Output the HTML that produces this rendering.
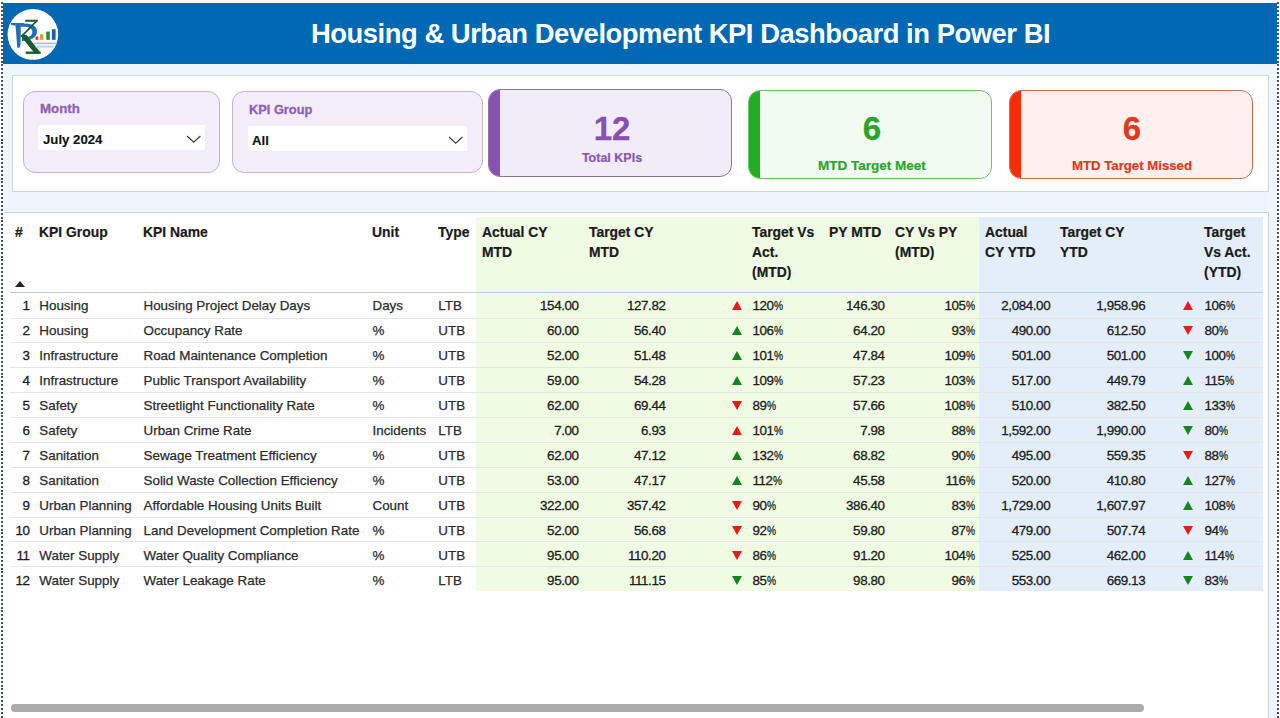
<!DOCTYPE html>
<html><head><meta charset="utf-8">
<style>
*{margin:0;padding:0;box-sizing:border-box}
html,body{width:1280px;height:718px;overflow:hidden;background:#fff;font-family:"Liberation Sans",sans-serif}
.abs{position:absolute}
#bg{left:3px;top:63px;width:1274px;height:655px;background:#eef5fb}
#hdr{left:3px;top:3px;width:1274px;height:60.5px;background:#0068b2}
#title{left:311px;top:17.5px;color:#fff;font-weight:bold;font-size:27.4px;letter-spacing:-0.47px;white-space:nowrap;line-height:32px}
#logo{left:8px;top:8px;width:51px;height:51px;border-radius:50%;background:#fff}
#dotL{left:1px;top:2px;width:2px;height:716px;background:repeating-linear-gradient(to bottom,#454c55 0 2px,transparent 2px 3.9px)}
#dotR{left:1277px;top:2px;width:2px;height:716px;background:repeating-linear-gradient(to bottom,#454c55 0 2px,transparent 2px 3.9px)}
#slpanel{left:12px;top:75px;width:1257px;height:117px;background:#fff;border:1px solid #c6dae6}
.slicer{background:#f3ecf9;border:1px solid #c4b3d0;border-radius:12px}
.sllabel{color:#8c5fb5;font-weight:bold;font-size:13.3px;-webkit-text-stroke:0.3px #8c5fb5;white-space:nowrap}
.dd{background:#fff}
.ddtext{color:#111;font-weight:bold;font-size:13.2px;-webkit-text-stroke:0.15px #111;white-space:nowrap}
.card{border-radius:12px;overflow:hidden}
#tpanel{left:4px;top:212px;width:1265px;height:506px;background:#fff;border-top:1px solid #c3d6e2;border-right:1px solid #c3d6e2}
#gbg{left:476px;top:217px;width:503px;height:374px;background:#f0fbe3}
#bbg{left:979px;top:217px;width:284px;height:374px;background:#e3eefa}
.th{font-weight:bold;font-size:13.9px;color:#1a1a1a;-webkit-text-stroke:0.2px #1a1a1a;line-height:20px;white-space:nowrap}
.td{font-size:13.4px;color:#2b2b2b;-webkit-text-stroke:0.25px #2b2b2b;white-space:nowrap;line-height:16px}
.r{text-align:right}
.n{letter-spacing:-0.4px;color:#1c1c1c;-webkit-text-stroke:0.3px #1c1c1c}
.pc{display:inline-block;transform:scaleX(.76);transform-origin:0 0;margin-right:-2.9px}
.knum{font-weight:bold;-webkit-text-stroke:0.3px currentColor;text-align:center;line-height:36px;white-space:nowrap}
.klab{font-weight:bold;-webkit-text-stroke:0.2px currentColor;text-align:center;line-height:16px;white-space:nowrap}
#scroll{left:11px;top:704px;width:1133px;height:8px;background:#ababab;border-radius:4px}
</style></head><body>
<div class="abs" id="bg"></div>
<div class="abs" id="hdr"></div>
<svg class="abs" style="left:6px;top:6px" width="56" height="56" viewBox="0 0 718 718">
<circle cx="345" cy="365" r="325" fill="#fff"/>
<path d="M62 218 L232 218 L228 244 L190 250 L186 500 L172 535 L145 535 L122 250 L70 246 Z" fill="#1f6fb5"/>
<path d="M185 226 C345 210 402 262 397 334 C392 408 320 448 205 448 L205 408 C292 404 338 382 338 334 C338 282 292 262 185 266 Z" fill="#1f6fb5"/>
<path d="M245 175 L412 175 L404 202 L245 202 Z" fill="#1d5a2a"/>
<path d="M378 192 L402 200 L208 398 L185 388 Z" fill="#1d5a2a"/>
<path d="M182 378 L262 370 L438 592 L362 600 Z" fill="#1d5a2a"/>
<path d="M252 584 L445 584 L445 614 L252 614 Z" fill="#1d5a2a"/>
<rect x="380" y="392" width="34" height="42" fill="#d62a1c"/>
<rect x="436" y="362" width="40" height="72" fill="#e8962a"/>
<rect x="516" y="328" width="46" height="106" fill="#2b8a3e"/>
<rect x="588" y="298" width="48" height="136" fill="#1a5fa8"/>
<rect x="355" y="468" width="285" height="22" fill="#5a6a90" opacity="0.45"/>
<rect x="372" y="508" width="238" height="26" fill="#6cc0d0" opacity="0.55"/>
</svg>
<div class="abs" id="title">Housing &amp; Urban Development KPI Dashboard in Power BI</div>
<div class="abs" id="slpanel"></div>
<div class="abs slicer" style="left:23px;top:91px;width:197px;height:82px"></div>
<div class="abs sllabel" style="left:40px;top:101px">Month</div>
<div class="abs dd" style="left:38px;top:125px;width:167px;height:25px"></div>
<div class="abs ddtext" style="left:43px;top:132px">July 2024</div>
<div class="abs slicer" style="left:232px;top:91px;width:251px;height:82px"></div>
<div class="abs sllabel" style="left:249px;top:102px;font-size:12.8px">KPI Group</div>
<div class="abs dd" style="left:248px;top:126px;width:219px;height:25px"></div>
<div class="abs ddtext" style="left:252px;top:133px">All</div>

<div class="abs card" style="left:488px;top:89px;width:244px;height:88px;background:#f2ecf8;border:1px solid #8a789c"><div class="abs" style="left:-1px;top:-1px;width:12px;height:88px;background:#8752ad"></div></div>
<div class="abs knum" style="left:560px;width:104px;top:111px;color:#8a4fb0;font-size:33px">12</div>
<div class="abs klab" style="left:560px;width:104px;top:150px;color:#8a57b0;font-size:12.5px">Total KPIs</div>
<div class="abs card" style="left:748px;top:90px;width:244px;height:89px;background:#f1fbf1;border:1px solid #6fc26f"><div class="abs" style="left:-1px;top:-1px;width:12px;height:89px;background:#22ad22"></div></div>
<div class="abs knum" style="left:820px;width:104px;top:111px;color:#2aa52a;font-size:33px">6</div>
<div class="abs klab" style="left:792px;width:160px;top:158px;color:#2aa52a;font-size:13.5px">MTD Target Meet</div>
<div class="abs card" style="left:1009px;top:90px;width:244px;height:89px;background:#fdf0ee;border:1px solid #c8705e"><div class="abs" style="left:-1px;top:-1px;width:12px;height:89px;background:#fa2c08"></div></div>
<div class="abs knum" style="left:1080px;width:104px;top:111px;color:#e03a1e;font-size:33px">6</div>
<div class="abs klab" style="left:1052px;width:160px;top:158px;color:#e03a1e;font-size:13.2px">MTD Target Missed</div>
<svg class="abs" style="left:186px;top:135px" width="16" height="9"><polyline points="1,1 7.7,7.2 14.4,1" fill="none" stroke="#3a3a3a" stroke-width="1.2"/></svg>
<svg class="abs" style="left:448px;top:136px" width="16" height="9"><polyline points="1,1 7.7,7.2 14.4,1" fill="none" stroke="#3a3a3a" stroke-width="1.2"/></svg>
<div class="abs" id="tpanel"></div>
<div class="abs" id="gbg"></div>
<div class="abs" id="bbg"></div>
<div class="abs th" style="left:15px;top:221.5px">#</div>
<div class="abs th" style="left:39px;top:221.5px">KPI Group</div>
<div class="abs th" style="left:143px;top:221.5px">KPI Name</div>
<div class="abs th" style="left:372px;top:221.5px">Unit</div>
<div class="abs th" style="left:438px;top:221.5px">Type</div>
<div class="abs th" style="left:482px;top:221.5px">Actual CY<br>MTD</div>
<div class="abs th" style="left:589px;top:221.5px">Target CY<br>MTD</div>
<div class="abs th" style="left:752px;top:221.5px">Target Vs<br>Act.<br>(MTD)</div>
<div class="abs th" style="left:829px;top:221.5px">PY MTD</div>
<div class="abs th" style="left:895px;top:221.5px">CY Vs PY<br>(MTD)</div>
<div class="abs th" style="left:985px;top:221.5px">Actual<br>CY YTD</div>
<div class="abs th" style="left:1060px;top:221.5px">Target CY<br>YTD</div>
<div class="abs th" style="left:1204px;top:221.5px">Target<br>Vs Act.<br>(YTD)</div>
<svg class="abs" style="left:15px;top:281px" width="10" height="6"><polygon points="5,0 10,6 0,6" fill="#222"/></svg>
<div class="abs" style="left:10px;top:292px;width:1253px;height:1px;background:#bccfd9"></div>
<div class="abs" style="left:10px;top:317.50px;width:1253px;height:1px;background:#e4e6e6"></div>
<div class="abs" style="left:10px;top:342.38px;width:1253px;height:1px;background:#e4e6e6"></div>
<div class="abs" style="left:10px;top:367.26px;width:1253px;height:1px;background:#e4e6e6"></div>
<div class="abs" style="left:10px;top:392.14px;width:1253px;height:1px;background:#e4e6e6"></div>
<div class="abs" style="left:10px;top:417.02px;width:1253px;height:1px;background:#e4e6e6"></div>
<div class="abs" style="left:10px;top:441.90px;width:1253px;height:1px;background:#e4e6e6"></div>
<div class="abs" style="left:10px;top:466.78px;width:1253px;height:1px;background:#e4e6e6"></div>
<div class="abs" style="left:10px;top:491.66px;width:1253px;height:1px;background:#e4e6e6"></div>
<div class="abs" style="left:10px;top:516.54px;width:1253px;height:1px;background:#e4e6e6"></div>
<div class="abs" style="left:10px;top:541.42px;width:1253px;height:1px;background:#e4e6e6"></div>
<div class="abs" style="left:10px;top:566.30px;width:1253px;height:1px;background:#e4e6e6"></div>
<div class="abs td" style="left:39.3px;top:298.30px">Housing</div>
<div class="abs td" style="left:143.5px;top:298.30px">Housing Project Delay Days</div>
<div class="abs td" style="left:372.5px;top:298.30px">Days</div>
<div class="abs td" style="left:438.3px;top:298.30px">LTB</div>
<div class="abs td n" style="left:752.4px;top:298.30px">120<span class="pc">%</span></div>
<div class="abs td n" style="left:1204.5px;top:298.30px">106<span class="pc">%</span></div>
<div class="abs td r n" style="right:1250.50px;top:298.30px">1</div>
<div class="abs td r n" style="right:701.40px;top:298.30px">154.00</div>
<div class="abs td r n" style="right:614.50px;top:298.30px">127.82</div>
<div class="abs td r n" style="right:395.40px;top:298.30px">146.30</div>
<div class="abs td r n" style="right:305.80px;top:298.30px">105<span class="pc">%</span></div>
<div class="abs td r n" style="right:229.80px;top:298.30px">2,084.00</div>
<div class="abs td r n" style="right:134.80px;top:298.30px">1,958.96</div>
<svg class="abs" style="left:731.5px;top:301.30px" width="10" height="9"><polygon points="5,0 10,9 0,9" fill="#e81a1a"/></svg>
<svg class="abs" style="left:1183px;top:301.30px" width="10" height="9"><polygon points="5,0 10,9 0,9" fill="#e81a1a"/></svg>
<div class="abs td" style="left:39.3px;top:323.25px">Housing</div>
<div class="abs td" style="left:143.5px;top:323.25px">Occupancy Rate</div>
<div class="abs td" style="left:372.5px;top:323.25px">%</div>
<div class="abs td" style="left:438.3px;top:323.25px">UTB</div>
<div class="abs td n" style="left:752.4px;top:323.25px">106<span class="pc">%</span></div>
<div class="abs td n" style="left:1204.5px;top:323.25px">80<span class="pc">%</span></div>
<div class="abs td r n" style="right:1250.50px;top:323.25px">2</div>
<div class="abs td r n" style="right:701.40px;top:323.25px">60.00</div>
<div class="abs td r n" style="right:614.50px;top:323.25px">56.40</div>
<div class="abs td r n" style="right:395.40px;top:323.25px">64.20</div>
<div class="abs td r n" style="right:305.80px;top:323.25px">93<span class="pc">%</span></div>
<div class="abs td r n" style="right:229.80px;top:323.25px">490.00</div>
<div class="abs td r n" style="right:134.80px;top:323.25px">612.50</div>
<svg class="abs" style="left:731.5px;top:326.25px" width="10" height="9"><polygon points="5,0 10,9 0,9" fill="#17851f"/></svg>
<svg class="abs" style="left:1183px;top:326.25px" width="10" height="9"><polygon points="0,0 10,0 5,9" fill="#e81a1a"/></svg>
<div class="abs td" style="left:39.3px;top:348.20px">Infrastructure</div>
<div class="abs td" style="left:143.5px;top:348.20px">Road Maintenance Completion</div>
<div class="abs td" style="left:372.5px;top:348.20px">%</div>
<div class="abs td" style="left:438.3px;top:348.20px">UTB</div>
<div class="abs td n" style="left:752.4px;top:348.20px">101<span class="pc">%</span></div>
<div class="abs td n" style="left:1204.5px;top:348.20px">100<span class="pc">%</span></div>
<div class="abs td r n" style="right:1250.50px;top:348.20px">3</div>
<div class="abs td r n" style="right:701.40px;top:348.20px">52.00</div>
<div class="abs td r n" style="right:614.50px;top:348.20px">51.48</div>
<div class="abs td r n" style="right:395.40px;top:348.20px">47.84</div>
<div class="abs td r n" style="right:305.80px;top:348.20px">109<span class="pc">%</span></div>
<div class="abs td r n" style="right:229.80px;top:348.20px">501.00</div>
<div class="abs td r n" style="right:134.80px;top:348.20px">501.00</div>
<svg class="abs" style="left:731.5px;top:351.20px" width="10" height="9"><polygon points="5,0 10,9 0,9" fill="#17851f"/></svg>
<svg class="abs" style="left:1183px;top:351.20px" width="10" height="9"><polygon points="0,0 10,0 5,9" fill="#17851f"/></svg>
<div class="abs td" style="left:39.3px;top:373.15px">Infrastructure</div>
<div class="abs td" style="left:143.5px;top:373.15px">Public Transport Availability</div>
<div class="abs td" style="left:372.5px;top:373.15px">%</div>
<div class="abs td" style="left:438.3px;top:373.15px">UTB</div>
<div class="abs td n" style="left:752.4px;top:373.15px">109<span class="pc">%</span></div>
<div class="abs td n" style="left:1204.5px;top:373.15px">115<span class="pc">%</span></div>
<div class="abs td r n" style="right:1250.50px;top:373.15px">4</div>
<div class="abs td r n" style="right:701.40px;top:373.15px">59.00</div>
<div class="abs td r n" style="right:614.50px;top:373.15px">54.28</div>
<div class="abs td r n" style="right:395.40px;top:373.15px">57.23</div>
<div class="abs td r n" style="right:305.80px;top:373.15px">103<span class="pc">%</span></div>
<div class="abs td r n" style="right:229.80px;top:373.15px">517.00</div>
<div class="abs td r n" style="right:134.80px;top:373.15px">449.79</div>
<svg class="abs" style="left:731.5px;top:376.15px" width="10" height="9"><polygon points="5,0 10,9 0,9" fill="#17851f"/></svg>
<svg class="abs" style="left:1183px;top:376.15px" width="10" height="9"><polygon points="5,0 10,9 0,9" fill="#17851f"/></svg>
<div class="abs td" style="left:39.3px;top:398.10px">Safety</div>
<div class="abs td" style="left:143.5px;top:398.10px">Streetlight Functionality Rate</div>
<div class="abs td" style="left:372.5px;top:398.10px">%</div>
<div class="abs td" style="left:438.3px;top:398.10px">UTB</div>
<div class="abs td n" style="left:752.4px;top:398.10px">89<span class="pc">%</span></div>
<div class="abs td n" style="left:1204.5px;top:398.10px">133<span class="pc">%</span></div>
<div class="abs td r n" style="right:1250.50px;top:398.10px">5</div>
<div class="abs td r n" style="right:701.40px;top:398.10px">62.00</div>
<div class="abs td r n" style="right:614.50px;top:398.10px">69.44</div>
<div class="abs td r n" style="right:395.40px;top:398.10px">57.66</div>
<div class="abs td r n" style="right:305.80px;top:398.10px">108<span class="pc">%</span></div>
<div class="abs td r n" style="right:229.80px;top:398.10px">510.00</div>
<div class="abs td r n" style="right:134.80px;top:398.10px">382.50</div>
<svg class="abs" style="left:731.5px;top:401.10px" width="10" height="9"><polygon points="0,0 10,0 5,9" fill="#e81a1a"/></svg>
<svg class="abs" style="left:1183px;top:401.10px" width="10" height="9"><polygon points="5,0 10,9 0,9" fill="#17851f"/></svg>
<div class="abs td" style="left:39.3px;top:423.05px">Safety</div>
<div class="abs td" style="left:143.5px;top:423.05px">Urban Crime Rate</div>
<div class="abs td" style="left:372.5px;top:423.05px">Incidents</div>
<div class="abs td" style="left:438.3px;top:423.05px">LTB</div>
<div class="abs td n" style="left:752.4px;top:423.05px">101<span class="pc">%</span></div>
<div class="abs td n" style="left:1204.5px;top:423.05px">80<span class="pc">%</span></div>
<div class="abs td r n" style="right:1250.50px;top:423.05px">6</div>
<div class="abs td r n" style="right:701.40px;top:423.05px">7.00</div>
<div class="abs td r n" style="right:614.50px;top:423.05px">6.93</div>
<div class="abs td r n" style="right:395.40px;top:423.05px">7.98</div>
<div class="abs td r n" style="right:305.80px;top:423.05px">88<span class="pc">%</span></div>
<div class="abs td r n" style="right:229.80px;top:423.05px">1,592.00</div>
<div class="abs td r n" style="right:134.80px;top:423.05px">1,990.00</div>
<svg class="abs" style="left:731.5px;top:426.05px" width="10" height="9"><polygon points="5,0 10,9 0,9" fill="#e81a1a"/></svg>
<svg class="abs" style="left:1183px;top:426.05px" width="10" height="9"><polygon points="0,0 10,0 5,9" fill="#17851f"/></svg>
<div class="abs td" style="left:39.3px;top:448.00px">Sanitation</div>
<div class="abs td" style="left:143.5px;top:448.00px">Sewage Treatment Efficiency</div>
<div class="abs td" style="left:372.5px;top:448.00px">%</div>
<div class="abs td" style="left:438.3px;top:448.00px">UTB</div>
<div class="abs td n" style="left:752.4px;top:448.00px">132<span class="pc">%</span></div>
<div class="abs td n" style="left:1204.5px;top:448.00px">88<span class="pc">%</span></div>
<div class="abs td r n" style="right:1250.50px;top:448.00px">7</div>
<div class="abs td r n" style="right:701.40px;top:448.00px">62.00</div>
<div class="abs td r n" style="right:614.50px;top:448.00px">47.12</div>
<div class="abs td r n" style="right:395.40px;top:448.00px">68.82</div>
<div class="abs td r n" style="right:305.80px;top:448.00px">90<span class="pc">%</span></div>
<div class="abs td r n" style="right:229.80px;top:448.00px">495.00</div>
<div class="abs td r n" style="right:134.80px;top:448.00px">559.35</div>
<svg class="abs" style="left:731.5px;top:451.00px" width="10" height="9"><polygon points="5,0 10,9 0,9" fill="#17851f"/></svg>
<svg class="abs" style="left:1183px;top:451.00px" width="10" height="9"><polygon points="0,0 10,0 5,9" fill="#e81a1a"/></svg>
<div class="abs td" style="left:39.3px;top:472.95px">Sanitation</div>
<div class="abs td" style="left:143.5px;top:472.95px">Solid Waste Collection Efficiency</div>
<div class="abs td" style="left:372.5px;top:472.95px">%</div>
<div class="abs td" style="left:438.3px;top:472.95px">UTB</div>
<div class="abs td n" style="left:752.4px;top:472.95px">112<span class="pc">%</span></div>
<div class="abs td n" style="left:1204.5px;top:472.95px">127<span class="pc">%</span></div>
<div class="abs td r n" style="right:1250.50px;top:472.95px">8</div>
<div class="abs td r n" style="right:701.40px;top:472.95px">53.00</div>
<div class="abs td r n" style="right:614.50px;top:472.95px">47.17</div>
<div class="abs td r n" style="right:395.40px;top:472.95px">45.58</div>
<div class="abs td r n" style="right:305.80px;top:472.95px">116<span class="pc">%</span></div>
<div class="abs td r n" style="right:229.80px;top:472.95px">520.00</div>
<div class="abs td r n" style="right:134.80px;top:472.95px">410.80</div>
<svg class="abs" style="left:731.5px;top:475.95px" width="10" height="9"><polygon points="5,0 10,9 0,9" fill="#17851f"/></svg>
<svg class="abs" style="left:1183px;top:475.95px" width="10" height="9"><polygon points="5,0 10,9 0,9" fill="#17851f"/></svg>
<div class="abs td" style="left:39.3px;top:497.90px">Urban Planning</div>
<div class="abs td" style="left:143.5px;top:497.90px">Affordable Housing Units Built</div>
<div class="abs td" style="left:372.5px;top:497.90px">Count</div>
<div class="abs td" style="left:438.3px;top:497.90px">UTB</div>
<div class="abs td n" style="left:752.4px;top:497.90px">90<span class="pc">%</span></div>
<div class="abs td n" style="left:1204.5px;top:497.90px">108<span class="pc">%</span></div>
<div class="abs td r n" style="right:1250.50px;top:497.90px">9</div>
<div class="abs td r n" style="right:701.40px;top:497.90px">322.00</div>
<div class="abs td r n" style="right:614.50px;top:497.90px">357.42</div>
<div class="abs td r n" style="right:395.40px;top:497.90px">386.40</div>
<div class="abs td r n" style="right:305.80px;top:497.90px">83<span class="pc">%</span></div>
<div class="abs td r n" style="right:229.80px;top:497.90px">1,729.00</div>
<div class="abs td r n" style="right:134.80px;top:497.90px">1,607.97</div>
<svg class="abs" style="left:731.5px;top:500.90px" width="10" height="9"><polygon points="0,0 10,0 5,9" fill="#e81a1a"/></svg>
<svg class="abs" style="left:1183px;top:500.90px" width="10" height="9"><polygon points="5,0 10,9 0,9" fill="#17851f"/></svg>
<div class="abs td" style="left:39.3px;top:522.85px">Urban Planning</div>
<div class="abs td" style="left:143.5px;top:522.85px">Land Development Completion Rate</div>
<div class="abs td" style="left:372.5px;top:522.85px">%</div>
<div class="abs td" style="left:438.3px;top:522.85px">UTB</div>
<div class="abs td n" style="left:752.4px;top:522.85px">92<span class="pc">%</span></div>
<div class="abs td n" style="left:1204.5px;top:522.85px">94<span class="pc">%</span></div>
<div class="abs td r n" style="right:1250.50px;top:522.85px">10</div>
<div class="abs td r n" style="right:701.40px;top:522.85px">52.00</div>
<div class="abs td r n" style="right:614.50px;top:522.85px">56.68</div>
<div class="abs td r n" style="right:395.40px;top:522.85px">59.80</div>
<div class="abs td r n" style="right:305.80px;top:522.85px">87<span class="pc">%</span></div>
<div class="abs td r n" style="right:229.80px;top:522.85px">479.00</div>
<div class="abs td r n" style="right:134.80px;top:522.85px">507.74</div>
<svg class="abs" style="left:731.5px;top:525.85px" width="10" height="9"><polygon points="0,0 10,0 5,9" fill="#e81a1a"/></svg>
<svg class="abs" style="left:1183px;top:525.85px" width="10" height="9"><polygon points="0,0 10,0 5,9" fill="#e81a1a"/></svg>
<div class="abs td" style="left:39.3px;top:547.80px">Water Supply</div>
<div class="abs td" style="left:143.5px;top:547.80px">Water Quality Compliance</div>
<div class="abs td" style="left:372.5px;top:547.80px">%</div>
<div class="abs td" style="left:438.3px;top:547.80px">UTB</div>
<div class="abs td n" style="left:752.4px;top:547.80px">86<span class="pc">%</span></div>
<div class="abs td n" style="left:1204.5px;top:547.80px">114<span class="pc">%</span></div>
<div class="abs td r n" style="right:1250.50px;top:547.80px">11</div>
<div class="abs td r n" style="right:701.40px;top:547.80px">95.00</div>
<div class="abs td r n" style="right:614.50px;top:547.80px">110.20</div>
<div class="abs td r n" style="right:395.40px;top:547.80px">91.20</div>
<div class="abs td r n" style="right:305.80px;top:547.80px">104<span class="pc">%</span></div>
<div class="abs td r n" style="right:229.80px;top:547.80px">525.00</div>
<div class="abs td r n" style="right:134.80px;top:547.80px">462.00</div>
<svg class="abs" style="left:731.5px;top:550.80px" width="10" height="9"><polygon points="0,0 10,0 5,9" fill="#e81a1a"/></svg>
<svg class="abs" style="left:1183px;top:550.80px" width="10" height="9"><polygon points="5,0 10,9 0,9" fill="#17851f"/></svg>
<div class="abs td" style="left:39.3px;top:572.75px">Water Supply</div>
<div class="abs td" style="left:143.5px;top:572.75px">Water Leakage Rate</div>
<div class="abs td" style="left:372.5px;top:572.75px">%</div>
<div class="abs td" style="left:438.3px;top:572.75px">LTB</div>
<div class="abs td n" style="left:752.4px;top:572.75px">85<span class="pc">%</span></div>
<div class="abs td n" style="left:1204.5px;top:572.75px">83<span class="pc">%</span></div>
<div class="abs td r n" style="right:1250.50px;top:572.75px">12</div>
<div class="abs td r n" style="right:701.40px;top:572.75px">95.00</div>
<div class="abs td r n" style="right:614.50px;top:572.75px">111.15</div>
<div class="abs td r n" style="right:395.40px;top:572.75px">98.80</div>
<div class="abs td r n" style="right:305.80px;top:572.75px">96<span class="pc">%</span></div>
<div class="abs td r n" style="right:229.80px;top:572.75px">553.00</div>
<div class="abs td r n" style="right:134.80px;top:572.75px">669.13</div>
<svg class="abs" style="left:731.5px;top:575.75px" width="10" height="9"><polygon points="0,0 10,0 5,9" fill="#17851f"/></svg>
<svg class="abs" style="left:1183px;top:575.75px" width="10" height="9"><polygon points="0,0 10,0 5,9" fill="#17851f"/></svg>
<div class="abs" id="scroll"></div>
<div class="abs" id="dotL"></div>
<div class="abs" id="dotR"></div>
</body></html>
